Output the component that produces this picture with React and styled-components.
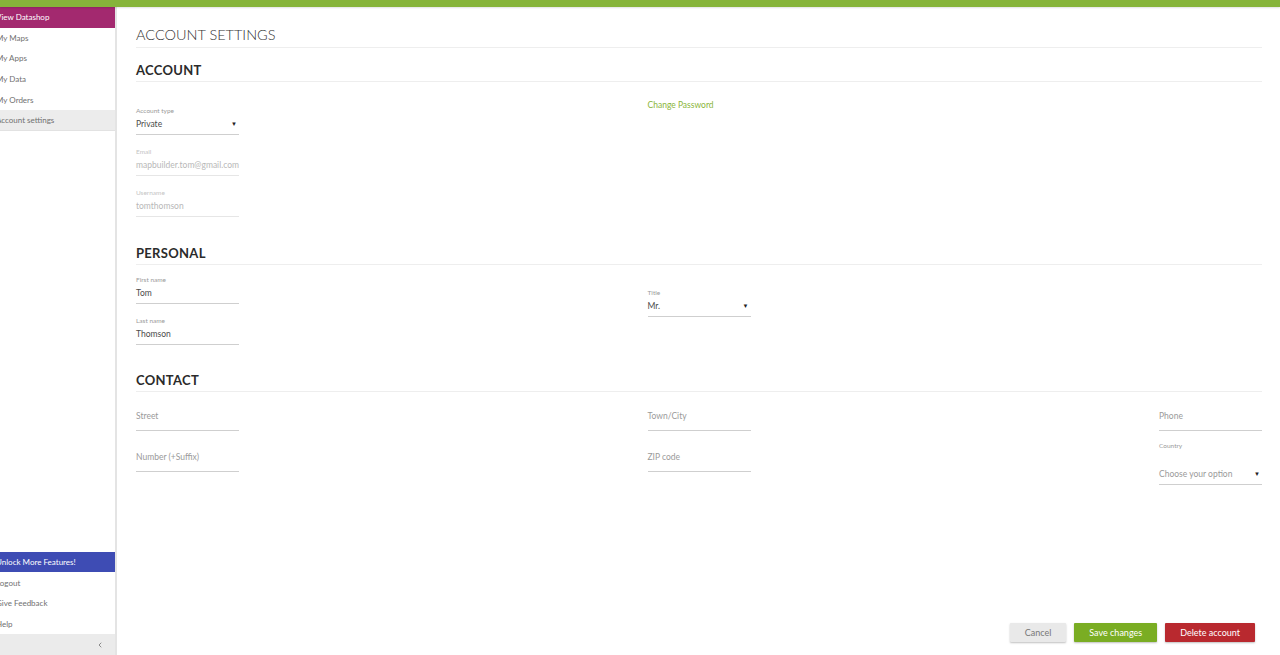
import styled, { createGlobalStyle } from 'styled-components'
import { ChevronLeft } from 'lucide-react'

const GlobalStyle = createGlobalStyle`
  html, body {
    margin: 0;
    padding: 0;
    background: #fff;
  }
  body {
    font-family: Lato, "Open Sans", "Liberation Sans", sans-serif;
    color: #444;
  }
  * {
    box-sizing: border-box;
  }
`

const Page = styled.div`
  height: 655px;
  display: flex;
  flex-direction: column;
  overflow: hidden;
`

const TopBar = styled.div`
  height: 7px;
  flex: none;
  background: #86b43a;
  box-shadow: 0 1px 2px rgba(0, 0, 0, 0.12);
  position: relative;
  z-index: 1;
`

const Body = styled.div`
  flex: 1;
  display: flex;
  min-height: 0;
`

const Sidebar = styled.nav`
  width: 117px;
  flex: none;
  display: flex;
  flex-direction: column;
  border-right: 2px solid #e4e4e4;
  overflow: hidden;
`

const NavGroup = styled.div`
  display: flex;
  flex-direction: column;
  margin-top: ${(p) => (p.$bottom ? 'auto' : '0')};
`

const NavItem = styled.div`
  height: 20.6px;
  display: flex;
  align-items: center;
  font-size: 8px;
  text-indent: -4px;
  white-space: nowrap;
  color: ${(p) => (p.$accent ? '#fff' : '#707070')};
  background: ${(p) => p.$accent || (p.$active ? '#ececec' : 'transparent')};
  border-bottom: ${(p) => (p.$active ? '1px solid #e2e2e2' : 'none')};
`

const Collapse = styled.div`
  height: 21px;
  display: flex;
  align-items: center;
  justify-content: flex-end;
  padding-right: 11px;
  background: #ebebeb;
  color: #777;
`

const Main = styled.main`
  flex: 1;
  display: flex;
  flex-direction: column;
  padding: 19px 18px 13px 19px;
  min-width: 0;
`

const PageTitle = styled.h1`
  margin: 0;
  font-size: 14.5px;
  line-height: 18px;
  font-weight: 300;
  color: #333;
  padding-bottom: 3px;
  border-bottom: 1px solid #eeeeee;
`

const SectionTitle = styled.h2`
  margin: ${(p) => p.$top}px 0 0;
  font-size: 13px;
  line-height: 16px;
  font-weight: 700;
  color: #2b2b2b;
  letter-spacing: 0.3px;
  padding-bottom: 3px;
  border-bottom: 1px solid #eeeeee;
`

const Row = styled.div`
  display: flex;
  justify-content: space-between;
  align-items: flex-start;
`

const Column = styled.div`
  width: 103px;
  display: flex;
  flex-direction: column;
  gap: ${(p) => p.$gap || 12}px;
  padding-top: ${(p) => p.$top || 0}px;
`

const Field = styled.div`
  display: flex;
  flex-direction: column;
  border-bottom: 1px solid ${(p) => (p.$disabled ? '#e6e6e6' : '#cfcfcf')};
  padding-bottom: ${(p) => (p.$plain ? 8 : 4)}px;
`

const Label = styled.div`
  font-size: 6.5px;
  line-height: 9px;
  color: ${(p) => (p.$disabled ? '#c4c4c4' : '#9a9a9a')};
  margin-bottom: ${(p) => p.$gap || 3}px;
`

const Value = styled.div`
  display: flex;
  align-items: center;
  justify-content: space-between;
  font-size: 8.5px;
  line-height: 12px;
  white-space: nowrap;
  color: ${(p) => (p.$muted ? '#b8b8b8' : p.$placeholder ? '#9a9a9a' : '#4a4a4a')};
`

const Caret = styled.span`
  font-size: 6px;
  color: #222;
  margin-right: 2px;
`

const LinkText = styled.a`
  font-size: 8.5px;
  line-height: 12px;
  color: #8ab53a;
  text-decoration: none;
  white-space: nowrap;
`

const Footer = styled.div`
  margin-top: auto;
  display: flex;
  justify-content: flex-end;
  gap: 8px;
  padding-right: 7px;
`

const Button = styled.button`
  height: 19px;
  padding: 0 15px;
  border: none;
  border-radius: 1px;
  font-family: inherit;
  font-size: 9px;
  color: ${(p) => (p.$variant === 'plain' ? '#777' : '#fff')};
  background: ${(p) =>
    p.$variant === 'save' ? '#7aad23' : p.$variant === 'danger' ? '#b9292f' : '#e9e9e9'};
  box-shadow: 0 1px 2px rgba(0, 0, 0, 0.25);
  cursor: pointer;
`

function InputField({ label, value, placeholder, disabled, select, labelGap }) {
  return (
    <Field $disabled={disabled} $plain={!label}>
      {label && (
        <Label $disabled={disabled} $gap={labelGap}>
          {label}
        </Label>
      )}
      <Value $muted={disabled} $placeholder={!value}>
        <span>{value || placeholder}</span>
        {select && <Caret>▼</Caret>}
      </Value>
    </Field>
  )
}

export default function App() {
  return (
    <>
      <GlobalStyle />
      <Page>
        <TopBar />
        <Body>
          <Sidebar>
            <NavGroup>
              <NavItem $accent="#a3296f">View Datashop</NavItem>
              <NavItem>My Maps</NavItem>
              <NavItem>My Apps</NavItem>
              <NavItem>My Data</NavItem>
              <NavItem>My Orders</NavItem>
              <NavItem $active>Account settings</NavItem>
            </NavGroup>
            <NavGroup $bottom>
              <NavItem $accent="#3e4cb4">Unlock More Features!</NavItem>
              <NavItem>Logout</NavItem>
              <NavItem>Give Feedback</NavItem>
              <NavItem>Help</NavItem>
              <Collapse>
                <ChevronLeft size={8} strokeWidth={2.5} />
              </Collapse>
            </NavGroup>
          </Sidebar>

          <Main>
            <PageTitle>ACCOUNT SETTINGS</PageTitle>

            <SectionTitle $top={14}>ACCOUNT</SectionTitle>
            <Row>
              <Column $top={24}>
                <InputField label="Account type" value="Private" select />
                <InputField label="Email" value="mapbuilder.tom@gmail.com" disabled />
                <InputField label="Username" value="tomthomson" disabled />
              </Column>
              <Column $top={17}>
                <LinkText href="#">Change Password</LinkText>
              </Column>
              <Column />
            </Row>

            <SectionTitle $top={28}>PERSONAL</SectionTitle>
            <Row>
              <Column $top={10}>
                <InputField label="First name" value="Tom" />
                <InputField label="Last name" value="Thomson" />
              </Column>
              <Column $top={23}>
                <InputField label="Title" value="Mr." select />
              </Column>
              <Column />
            </Row>

            <SectionTitle $top={27}>CONTACT</SectionTitle>
            <Row>
              <Column $top={18} $gap={20}>
                <InputField placeholder="Street" />
                <InputField placeholder="Number (+Suffix)" />
              </Column>
              <Column $top={18} $gap={20}>
                <InputField placeholder="Town/City" />
                <InputField placeholder="ZIP code" />
              </Column>
              <Column $top={18} $gap={10}>
                <InputField placeholder="Phone" />
                <InputField label="Country" placeholder="Choose your option" select labelGap={18} />
              </Column>
            </Row>

            <Footer>
              <Button $variant="plain">Cancel</Button>
              <Button $variant="save">Save changes</Button>
              <Button $variant="danger">Delete account</Button>
            </Footer>
          </Main>
        </Body>
      </Page>
    </>
  )
}
